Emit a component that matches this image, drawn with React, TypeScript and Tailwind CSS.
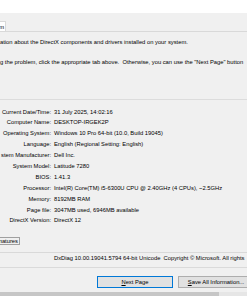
import React from 'react'

const rows: [string, string][] = [
  ['Current Date/Time:', '31 July 2025, 14:02:16'],
  ['Computer Name:', 'DESKTOP-IRGEK2P'],
  ['Operating System:', 'Windows 10 Pro 64-bit (10.0, Build 19045)'],
  ['Language:', 'English (Regional Setting: English)'],
  ['stem Manufacturer:', 'Dell Inc.'],
  ['System Model:', 'Latitude 7280'],
  ['BIOS:', '1.41.3'],
  ['Processor:', 'Intel(R) Core(TM) i5-6300U CPU @ 2.40GHz (4 CPUs), ~2.5GHz'],
  ['Memory:', '8192MB RAM'],
  ['Page file:', '3047MB used, 6946MB available'],
  ['DirectX Version:', 'DirectX 12']
]

const App: React.FC = () => {
  return (
    <div
      className="w-[247px] h-[296px] overflow-hidden bg-[#f0f0f0] text-[5.8px] text-black whitespace-nowrap"
      style={{ fontFamily: '"Liberation Sans", Arial, sans-serif' }}
    >
      <div className="h-[13px] bg-white" />

      {/* tab strip */}
      <div className="flex items-end h-[19px] border-b border-[#d9d9d9]">
        <div className="h-[10px] w-[6px] bg-white border-r border-t border-[#d9d9d9] leading-[10px] overflow-hidden flex justify-end pr-[1px]">
          m
        </div>
      </div>

      <div className="mt-[4.5px] h-[11px] leading-[11px]">
        ation about the DirectX components and drivers installed on your system.
      </div>
      <div className="mt-[9px] h-[11px] leading-[11px]">
        g the problem, click the appropriate tab above.&nbsp; Otherwise, you can use the "Next Page" button
      </div>

      {/* group box */}
      <div className="mt-[31.5px] border-t border-[#dcdcdc] pt-[6.5px]">
        {rows.map(([label, value]) => (
          <div key={label} className="flex h-[10.9px] leading-[11px]">
            <div className="w-[51px] flex justify-end">{label}</div>
            <div className="ml-[3px]">{value}</div>
          </div>
        ))}
      </div>

      <div className="mt-[11px] h-[8px] w-[20px] border border-[#a0a0a0] border-l-0 leading-[6px] flex justify-end pr-[1px]">
        natures
      </div>

      <div className="mt-[6.5px] border-t border-[#d9d9d9]" />
      <div className="mt-[0.5px] h-[11px] leading-[11px] pl-[54px]">
        DxDiag 10.00.19041.5794 64-bit Unicode&nbsp; Copyright © Microsoft. All rights
      </div>
      <div className="mt-[2.5px] border-t border-[#dadada]" />

      <div className="mt-[8px] flex gap-[5px] pl-[97px]">
        <button className="h-[12px] w-[76px] shrink-0 bg-[#e1e1e1] border border-[#0078d7] leading-[10px] text-[5.8px]">
          <span className="underline">N</span>ext Page
        </button>
        <button className="h-[12px] w-[76px] shrink-0 bg-[#e1e1e1] border border-[#adadad] leading-[10px] text-[5.8px]">
          <span className="underline">S</span>ave All Information...
        </button>
      </div>

      <div className="mt-[4px] flex h-[4px]">
        <div className="w-[219px] bg-[#c6c6c6]" />
        <div className="flex-1 bg-[#e6e6e6]" />
      </div>
    </div>
  )
}

export default App
